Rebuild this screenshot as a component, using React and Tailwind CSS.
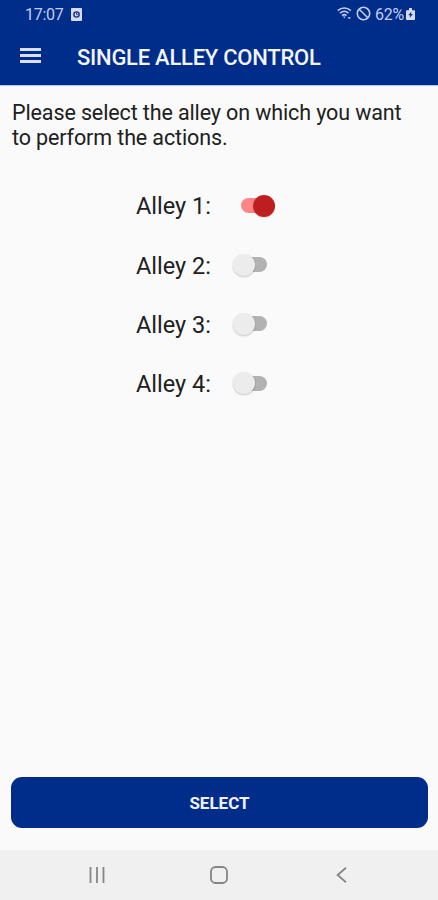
import { useState } from 'react'

const alleys = [1, 2, 3, 4]

function StatusBar() {
  return (
    <div className="h-7 flex items-center justify-between pl-[25px] pr-[23px] text-[#c3cdf2] text-[16px] leading-7">
      <div className="flex items-center">
        <span className="w-[38px] pt-px tracking-[-0.3px] whitespace-nowrap">17:07</span>
        <svg className="ml-2 w-[11px] h-[13px]" viewBox="0 0 11 13">
          <rect width="11" height="13" rx="1" fill="#d6dcf5" />
          <circle cx="5.5" cy="6.5" r="2.6" fill="none" stroke="#12298a" strokeWidth="1.4" />
          <path d="M5.5 4.8v1.8h1.2" fill="none" stroke="#12298a" strokeWidth=".9" />
        </svg>
      </div>
      <div className="flex items-center">
        <svg className="-mt-[3px] w-[16px] h-[14px]" viewBox="0 0 16 14" fill="none" stroke="currentColor">
          <path d="M.8 4.6C4.6 1 10 1 13.8 4.6M3 7.2c2.7-2.5 5.9-2.5 8.6 0M5.1 9.6c1.5-1.3 2.9-1.3 4.4 0" strokeWidth="1.5" />
          <path d="M6 10.4h2.6l-1.3 1.8z" fill="currentColor" stroke="none" />
          <path d="M10.4 11.2l1.8 2 1.8-2z" fill="currentColor" stroke="none" />
        </svg>
        <svg className="-mt-[2px] ml-[3px] w-[15px] h-[15px]" viewBox="0 0 15 15" fill="none" stroke="currentColor" strokeWidth="1.6">
          <circle cx="7.5" cy="7.5" r="6.2" />
          <path d="M3.2 3.2l8.6 8.6" />
        </svg>
        <span className="ml-[4px] w-[30px] pt-px tracking-[-0.3px] whitespace-nowrap">62%</span>
        <svg className="ml-px w-[9px] h-[12px]" viewBox="0 0 9 12">
          <path d="M3 0h3v2.2h2.2q.8 0 .8.8v8.2q0 .8-.8.8H.8q-.8 0-.8-.8V3q0-.8.8-.8H3z" fill="#d6dcf5" />
          <path d="M5.4 3.6L2.2 7.2h2L3.6 10l3.4-3.9H5z" fill="#12298a" />
        </svg>
      </div>
    </div>
  )
}

function Toggle({ on, onClick }) {
  return (
    <button
      type="button"
      role="switch"
      aria-checked={on}
      onClick={onClick}
      className={`w-[45px] h-[22px] flex items-center ${on ? 'pl-[9px]' : 'pl-0'}`}
    >
      <span
        className={`w-[26px] h-[15px] rounded-full flex items-center ${
          on ? 'bg-[#ff8587] justify-end' : 'ml-[9px] bg-[#b2b2b2] justify-start'
        }`}
      >
        <span
          className={`w-[22px] h-[22px] shrink-0 rounded-full ${
            on
              ? '-mr-[8px] bg-[#bf1e20] shadow-[0_1px_2px_rgba(0,0,0,0.15)]'
              : '-ml-[8px] bg-[#ececec] shadow-[0_1px_2px_rgba(0,0,0,0.22)]'
          }`}
        />
      </span>
    </button>
  )
}

export default function App() {
  const [selected, setSelected] = useState(1)

  return (
    <div className="w-full h-screen flex flex-col overflow-hidden bg-[#fafafa] font-[Roboto,sans-serif] text-[#202020]">
      <header className="h-[85px] shrink-0 bg-[#002c8a] shadow-[0_1px_0_#b9c2e2]">
        <StatusBar />
        <div className="h-14 flex items-center pl-5">
          <button type="button" aria-label="Menu" className="-mt-px w-[21px] flex flex-col gap-[3.5px]">
            <span className="h-[2.5px] bg-[#d9dff5]" />
            <span className="h-[2.5px] bg-[#d9dff5]" />
            <span className="h-[2.5px] bg-[#d9dff5]" />
          </button>
          <h1 className="ml-9 pt-[2px] text-[22px] font-medium tracking-[-0.26px] text-[#f3f5ff] whitespace-nowrap">
            SINGLE ALLEY CONTROL
          </h1>
        </div>
      </header>

      <main className="flex-1 flex flex-col px-[11px]">
        <p className="mt-[15px] pl-px pr-4 text-[21.5px] leading-[25px] tracking-[-0.12px]">
          Please select the alley on which you want to perform the actions.
        </p>

        <div className="mt-[26px] ml-[125px] flex flex-col">
          {alleys.map((n) => (
            <div key={n} className="h-[59.2px] flex items-center">
              <span className="w-[96px] pt-[3px] text-[23.5px] whitespace-nowrap">Alley {n}:</span>
              <Toggle on={selected === n} onClick={() => setSelected(n)} />
            </div>
          ))}
        </div>

        <button
          type="button"
          className="mt-auto mb-[22px] -mr-px h-[51px] rounded-[11px] bg-[#002c8a] pt-[2px] text-[#f0f3ff] text-[17px] font-bold"
        >
          SELECT
        </button>
      </main>

      <nav className="h-[50px] shrink-0 bg-[#f0f0f0] flex items-center text-[#858585]">
        <svg className="ml-[88px] w-[18px] h-[16px]" viewBox="0 0 18 16" stroke="currentColor" strokeWidth="1.8">
          <path d="M2.5 0v16M9 0v16M15.5 0v16" />
        </svg>
        <svg className="ml-[104px] w-[18px] h-[18px]" viewBox="0 0 18 18" fill="none" stroke="currentColor" strokeWidth="1.8">
          <rect x="1" y="1" width="16" height="16" rx="4.5" />
        </svg>
        <svg className="ml-[108px] w-[11px] h-[16px]" viewBox="0 0 11 16" fill="none" stroke="currentColor" strokeWidth="1.8">
          <path d="M10 .8L1.6 8l8.4 7.2" />
        </svg>
      </nav>
    </div>
  )
}
